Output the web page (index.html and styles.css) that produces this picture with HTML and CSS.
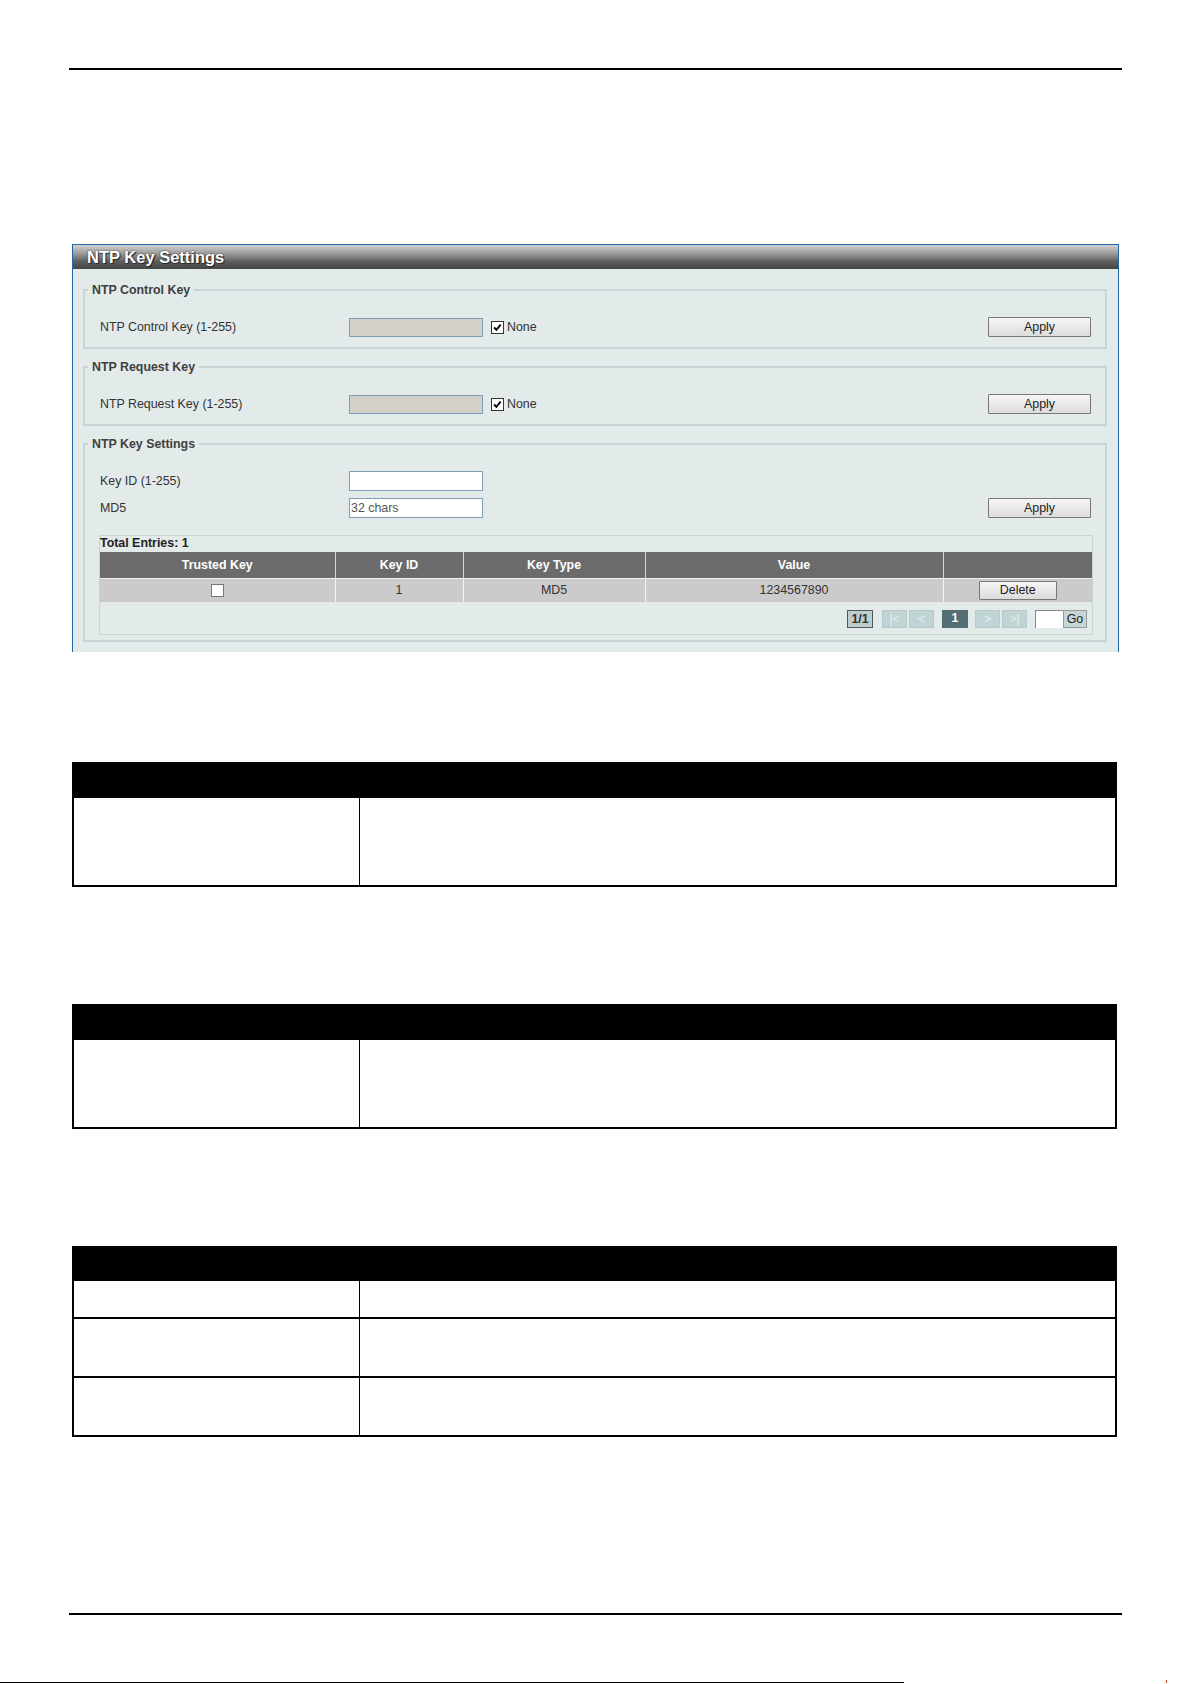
FILE: index.html
```html
<!DOCTYPE html>
<html lang="en">
<head>
  <meta charset="UTF-8" />
  <meta name="viewport" content="width=device-width, initial-scale=1.0">
  <title>NTP Key Settings</title>
  <link rel="stylesheet" href="styles.css">
</head>
<body>

  <div class="sheet">
    <div class="rule"></div>

    <section class="panel">
      <div class="panel-title">NTP Key Settings</div>

      <fieldset class="group">
        <legend>NTP Control Key</legend>
        <div class="group-body">
          <div class="row row-first">
            <span class="row-label">NTP Control Key (1-255)</span>
            <span class="field field-off"></span>
            <span class="check check-on"><svg viewBox="0 0 13 13"><path d="M2.5 6.5 L5.2 9.3 L10.2 3.2" /></svg></span>
            <span class="check-text">None</span>
            <button class="btn btn-apply">Apply</button>
          </div>
        </div>
      </fieldset>

      <fieldset class="group">
        <legend>NTP Request Key</legend>
        <div class="group-body">
          <div class="row row-first">
            <span class="row-label">NTP Request Key (1-255)</span>
            <span class="field field-off"></span>
            <span class="check check-on"><svg viewBox="0 0 13 13"><path d="M2.5 6.5 L5.2 9.3 L10.2 3.2" /></svg></span>
            <span class="check-text">None</span>
            <button class="btn btn-apply">Apply</button>
          </div>
        </div>
      </fieldset>

      <fieldset class="group">
        <legend>NTP Key Settings</legend>
        <div class="group-body">
          <div class="row row-key">
            <span class="row-label">Key ID (1-255)</span>
            <span class="field"></span>
          </div>
          <div class="row row-md5">
            <span class="row-label">MD5</span>
            <span class="field">32 chars</span>
            <button class="btn btn-apply">Apply</button>
          </div>

          <div class="entries">
            <div class="entries-total">Total Entries: 1</div>
            <table class="grid">
              <colgroup>
                <col style="width:235px">
                <col style="width:128px">
                <col style="width:182px">
                <col style="width:298px">
                <col>
              </colgroup>
              <thead>
                <tr>
                  <th>Trusted Key</th>
                  <th>Key ID</th>
                  <th>Key Type</th>
                  <th>Value</th>
                  <th></th>
                </tr>
              </thead>
              <tbody>
                <tr>
                  <td><span class="check check-off"></span></td>
                  <td>1</td>
                  <td>MD5</td>
                  <td>1234567890</td>
                  <td><button class="btn btn-delete">Delete</button></td>
                </tr>
              </tbody>
            </table>
            <div class="pager">
              <span class="pg pg-count">1/1</span>
              <span class="pg pg-off pg-first">|&lt;</span>
              <span class="pg pg-off pg-near">&lt;</span>
              <span class="pg pg-current">1</span>
              <span class="pg pg-off pg-next">&gt;</span>
              <span class="pg pg-off pg-near">&gt;|</span>
              <span class="pg-input"></span>
              <span class="pg pg-go">Go</span>
            </div>
          </div>
        </div>
      </fieldset>
    </section>

    <div class="doc doc-first">
      <div class="doc-head"></div>
      <div class="doc-row doc-tall"><div class="doc-key"></div><div></div></div>
    </div>

    <div class="doc">
      <div class="doc-head"></div>
      <div class="doc-row doc-tall"><div class="doc-key"></div><div></div></div>
    </div>

    <div class="doc">
      <div class="doc-head doc-head-slim"></div>
      <div class="doc-row doc-short"><div class="doc-key"></div><div></div></div>
      <div class="doc-row doc-mid"><div class="doc-key"></div><div></div></div>
      <div class="doc-row doc-mid"><div class="doc-key"></div><div></div></div>
    </div>

    <div class="rule rule-foot"></div>
  </div>

  <div class="edge">
    <span class="edge-line"></span>
    <span class="edge-mark"></span>
  </div>

</body>
</html>
```

FILE: styles.css
```css
html, body {
  margin: 0;
  padding: 0;
}
*, *::before, *::after {
  box-sizing: border-box;
}
body {
  font-family: 'Liberation Sans', Arial, sans-serif;
  background: #fff;
  width: 1192px;
}

.sheet {
  width: 1053px;
  margin-left: 69px;
  padding-top: 68px;
}

.rule {
  height: 2px;
  background: #000;
}

.rule-foot {
  margin-top: 176px;
}

/* settings panel */
.panel {
  margin: 174px 3px 0 3px;
  height: 408px;
  background: #e2eaea;
  border: 1px solid #2467a8;
  border-bottom: 0;
  font-size: 12.4px;
  color: #333;
}

.panel-title {
  height: 24px;
  line-height: 25px;
  padding-left: 14px;
  color: #fff;
  font-size: 16.5px;
  font-weight: bold;
  text-shadow: 1px 1px 1px #222, 0 0 2px #333;
  background: linear-gradient(to bottom, #d2d2d2 0%, #9c9c9c 35%, #5c5c5c 70%, #454545 100%);
}

.group {
  margin: 11px 11px 0 10px;
  padding: 0;
  border: 2px solid #c9d4d4;
  min-width: 0;
}
.panel-title + .group {
  margin-top: 14px;
}

.group legend {
  margin-left: 3px;
  padding: 0 4px;
  font-weight: bold;
  font-size: 12.4px;
  line-height: 14px;
  color: #404040;
}

.group-body {
  padding: 0 12px 10px 14px;
}
.group:last-child .group-body {
  padding-bottom: 5px;
}

.row {
  display: flex;
  align-items: center;
  padding: 0 2px 0 1px;
}
.row-first {
  margin-top: 20px;
  height: 20px;
}
.row-key {
  margin-top: 19px;
  height: 21px;
}
.row-md5 {
  margin-top: 6px;
  height: 21px;
}

.row-label {
  flex: 0 0 249px;
  color: #333;
}

.field {
  width: 134px;
  height: 20px;
  line-height: 18px;
  padding-left: 1px;
  background: #fff;
  border: 1px solid #7f9db9;
  color: #555;
}
.row-first .field {
  height: 19px;
}
.field-off {
  background: #d4d0c8;
}

.check {
  display: inline-block;
  width: 13px;
  height: 13px;
  background: #fff;
  border: 1px solid #333;
}
.check svg {
  display: block;
  width: 11px;
  height: 11px;
  fill: none;
  stroke: #000;
  stroke-width: 2.2;
}
.check-on {
  margin-left: 8px;
}
.check-off {
  width: 13px;
  height: 13px;
  border-color: #777;
  vertical-align: middle;
}
.check-text {
  margin-left: 3px;
  color: #333;
}

.btn {
  font-family: inherit;
  font-size: 12.4px;
  color: #222;
  padding: 0;
  background: linear-gradient(to bottom, #f6f6f6, #dcdcdc);
  border: 1px solid #777;
  border-radius: 1px;
}
.btn-apply {
  margin-left: auto;
  width: 103px;
  height: 20px;
}
.btn-delete {
  width: 78px;
  height: 19px;
  vertical-align: middle;
}

/* key list */
.entries {
  margin-top: 17px;
  border: 1px solid #c9d4d4;
}

.entries-total {
  height: 16px;
  line-height: 15px;
  font-weight: bold;
  color: #222;
}

.grid {
  width: 100%;
  table-layout: fixed;
  border-collapse: collapse;
}
.grid th {
  height: 26px;
  background: #6b6b6b;
  color: #fff;
  font-weight: bold;
  border-left: 1px solid #d6d6d6;
  padding: 0;
}
.grid td {
  height: 24px;
  background: #cbcbcb;
  color: #333;
  text-align: center;
  border-left: 1px solid #f2f2f2;
  border-top: 1px solid #f2f2f2;
  padding: 0;
}
.grid th:first-child,
.grid td:first-child {
  border-left: 0;
}

.pager {
  height: 32px;
  display: flex;
  justify-content: flex-end;
  align-items: flex-start;
  padding: 8px 5px 0 0;
}

.pg {
  height: 18px;
  line-height: 17px;
  text-align: center;
  font-weight: bold;
}
.pg-count {
  width: 26px;
  background: #bccece;
  border: 1px solid #555;
  color: #333;
}
.pg-off {
  width: 25px;
  background: #c0d3d5;
  border: 1px solid #b6c9cb;
  color: #e6efef;
  font-weight: normal;
}
.pg-first {
  margin-left: 9px;
}
.pg-near {
  margin-left: 2px;
}
.pg-current {
  width: 26px;
  margin-left: 8px;
  background: #546e74;
  color: #fff;
}
.pg-next {
  margin-left: 7px;
}
.pg-input {
  width: 28px;
  height: 18px;
  margin-left: 8px;
  background: #fff;
  border-top: 1px solid #888;
  border-left: 1px solid #888;
}
.pg-go {
  width: 24px;
  background: #c4d6d7;
  border: 1px solid #999;
  color: #222;
  font-weight: normal;
}

/* description tables */
.doc {
  margin: 117px 5px 0 3px;
  border: 2px solid #000;
  border-top: 0;
}
.doc-first {
  margin-top: 110px;
}

.doc-head {
  height: 36px;
  background: #000;
}
.doc-head-slim {
  height: 35px;
}

.doc-row {
  display: grid;
  grid-template-columns: 286px 1fr;
  border-top: 2px solid #000;
}
.doc-head + .doc-row {
  border-top: 0;
}

.doc-key {
  border-right: 1px solid #000;
}

.doc-tall {
  height: 87px;
}
.doc-short {
  height: 36px;
}
.doc-mid {
  height: 59px;
}

/* page edge */
.edge {
  display: flex;
  align-items: flex-end;
  height: 3px;
  margin-top: 65px;
}
.edge-line {
  width: 904px;
  height: 1px;
  background: #000;
}
.edge-mark {
  width: 1px;
  height: 3px;
  margin-left: 262px;
  background: #c0392b;
}
```
